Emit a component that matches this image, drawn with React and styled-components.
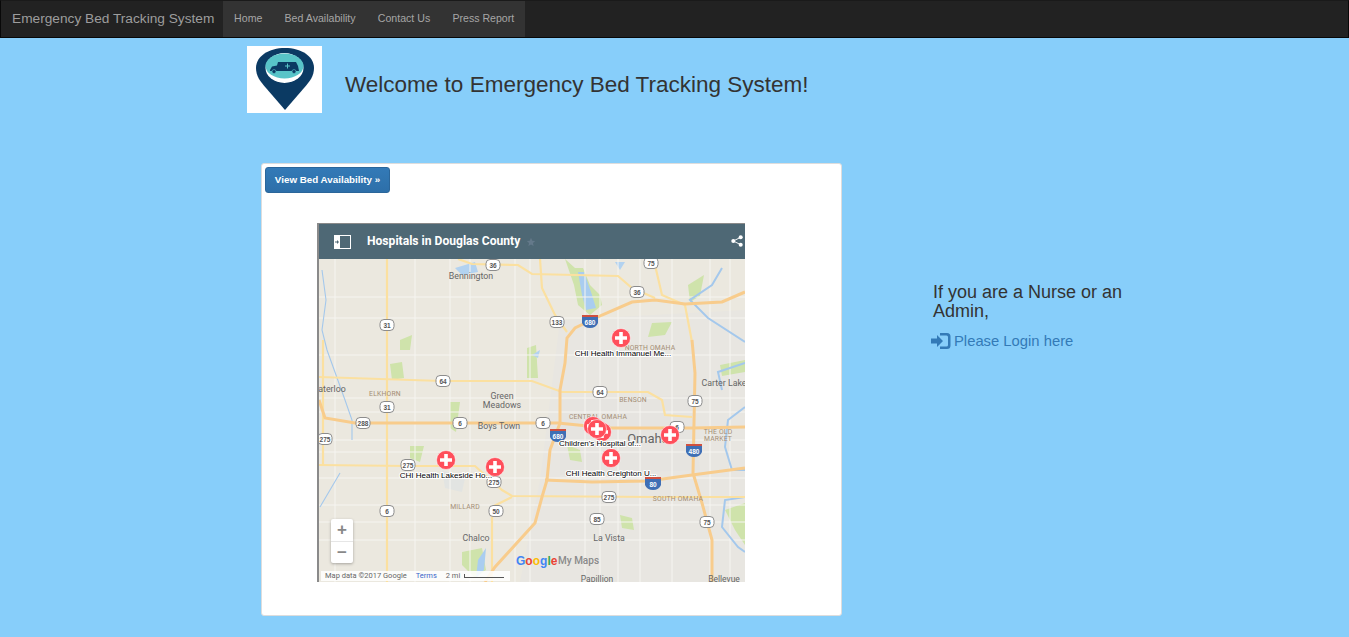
import React from "react";
import styled, { createGlobalStyle } from "styled-components";

const Global = createGlobalStyle`
  html, body { margin: 0; padding: 0; }
  body { background: #87cefa; font-family: "Liberation Sans", Arial, sans-serif; color: #333; min-height: 100vh; }
  * { box-sizing: border-box; }
`;

const Navbar = styled.nav`
  display: flex; height: 38px; background: #222; border: 1px solid #080808; border-top-color:#1a1a1a;
`;
const Brand = styled.a`
  font-size: 13.7px; line-height: 35px; color: #9d9d9d; padding: 0 11px; white-space: nowrap; width: 222px;
`;
const NavList = styled.div`
  display: flex; background: #333;
`;
const NavLink = styled.a`
  font-size: 10.6px; line-height: 35px; color: #a6a6a6; padding: 0 11.1px; white-space: nowrap;
`;
const Content = styled.main`
  padding: 8px 0 0 247px;
`;
const Header = styled.header`
  display: flex; align-items: center; height: 67px;
`;
const LogoBox = styled.div`
  width: 75px; height: 67px; background: #fff; flex: none;
  svg { display: block; }
`;
const Title = styled.h1`
  margin: 0 0 0 23px; font-size: 22.5px; font-weight: 400; color: #333; line-height: 1.1; position: relative; top: 6px;
  white-space: nowrap;
`;
const Row = styled.div`
  display: flex; margin: 50px 0 0 14px; align-items: flex-start;
`;
const Card = styled.section`
  width: 581px; height: 453px; background: #fff; border: 1px solid #ddd; border-radius: 3px; padding: 3px; flex: none;
`;
const Button = styled.a`
  display: block; width: 125px; height: 26px; line-height: 24px; text-align: center; font-size: 9.8px; font-weight: 700; color: #fff;
  background: linear-gradient(#337ab7, #2d6fa9); border: 1px solid #2b669a; border-radius: 3px;
`;
const MapFrame = styled.div`
  width: 428px; height: 359px; margin: 30px 0 0 52px; border-left: 2px solid #8a8a8a; border-top: 1px solid #8a8a8a; position: relative; overflow: hidden;
`;
const MapBar = styled.div`
  height: 35px; background: #4e6875; display: flex; align-items: center; padding-left: 15px; color: #fff; position: relative;
`;
const MapTitle = styled.span`
  font-family: Roboto, "Liberation Sans", sans-serif; font-weight: 700; font-size: 12.1px; margin-left: 16px; white-space: nowrap; position: relative; top: -1px;
`;
const BarIcon = styled.svg`
  flex: none; display: block;
`;
const ShareSlot = styled.div`
  position: absolute; right: 2px; top: 11px; line-height: 0;
`;
const MapCanvas = styled.svg`
  display: block; width: 426px; height: 323px;
`;
const ZoomBox = styled.div`
  position: absolute; left: 12px; top: 295px; width: 22px; height: 44px; background: #fff; border-radius: 2px;
  box-shadow: 0 1px 3px rgba(0,0,0,.3); display: flex; flex-direction: column;
`;
const ZoomBtn = styled.div`
  height: 22px; line-height: 21px; text-align: center; color: #888; font-size: 17px; font-weight: 700;
  border-top: ${(p) => (p.$split ? "1px solid #e6e6e6" : "0")};
`;
const Attribution = styled.div`
  position: absolute; left: 2px; top: 347px; width: 189px; height: 10px; background: rgba(255,255,255,.85);
  display: flex; align-items: center; padding-left: 4px; font: 7.5px/10px Roboto, sans-serif; color: #666; white-space: nowrap;
`;
const Terms = styled.span`
  color: #3a66c9; margin: 0 9px;
`;
const Scale = styled.i`
  display: inline-block; width: 40px; height: 4px; margin-left: 4px; border-left: 1px solid #555; border-bottom: 1px solid #555;
`;
const Side = styled.aside`
  width: 220px; margin: 120px 0 0 91px;
`;
const SideText = styled.h3`
  margin: 0; font-size: 18px; line-height: 19px; font-weight: 400; color: #333; width: 205px;
`;
const LoginLink = styled.a`
  display: flex; align-items: center; margin: 10px 0 0 -2px; color: #337ab7; font-size: 14.8px; line-height: 20px; white-space: nowrap;
  svg { margin-right: 3px; flex: none; }
`;

const Place = styled.text`
  font-family: Roboto, "Liberation Sans", sans-serif; font-size: ${(p) => p.$size || 8.5}px; fill: ${(p) => p.$fill || "#6b675e"};
  letter-spacing: ${(p) => p.$sp || 0}px; text-anchor: middle;
`;
const PinLabel = styled.text`
  font-family: "Liberation Sans", sans-serif; font-size: 8px; fill: #000; text-anchor: middle;
  paint-order: stroke; stroke: #fff; stroke-width: 2px;
`;
const ShieldText = styled.text`
  font-family: "Liberation Sans", sans-serif; font-size: 6.5px; font-weight: 700; text-anchor: middle; fill: ${(p) => p.$fill};
`;
const GoogleText = styled.text`
  font-family: "Liberation Sans", sans-serif; font-size: 12px; font-weight: 700;
`;
const MyMaps = styled.text`
  font-family: Roboto, sans-serif; font-size: 10px; font-weight: 500; fill: #8a8a8a;
`;

const navItems = ["Home", "Bed Availability", "Contact Us", "Press Report"];

const Logo = () => (
  <svg width="75" height="67" viewBox="247 46 75 67">
    <path d="M285 110 L266 88 C260 81 256 76 256 68 C256 56 269 48 285 48 C301 48 314 56 314 68 C314 76 310 81 304 88 Z" fill="#0b3a63" />
    <ellipse cx="284.500" cy="68" rx="19" ry="15" fill="#fff" />
    <ellipse cx="284.500" cy="66" rx="19" ry="12.500" fill="#58c4c8" />
    <path d="M270 70 L272 66.500 L277 65.500 L278 62 L296 62 L298 66 L299 71 L270 71Z" fill="#0b3a63" />
    <circle cx="274" cy="71.500" r="2" fill="#0b3a63" stroke="#58c4c8" strokeWidth=".6" />
    <circle cx="294" cy="71.500" r="2" fill="#0b3a63" stroke="#58c4c8" strokeWidth=".6" />
    <path d="M285 65.500 h2 v-2 h1 v2 h2 v1 h-2 v2 h-1 v-2 h-2z" fill="#58c4c8" />
  </svg>
);

const LoginIcon = () => (
  <svg width="20" height="18" viewBox="0 0 20 18">
    <path d="M0 6.500h6V3l6 6-6 6v-3.500H0z" fill="#337ab7" />
    <path d="M9 1h7a3.500 3.500 0 0 1 3.500 3.500v9A3.500 3.500 0 0 1 16 17H9v-2.500h6.500a1.500 1.500 0 0 0 1.500-1.500V5a1.500 1.500 0 0 0-1.500-1.500H9z" fill="#337ab7" />
  </svg>
);

const minorV = [335,415,450,470,515,530,585,600,618,640,672,710,730];
const minorH = [297,318,355,398,412,440,452,478,505,522,540];

const yellow = [
  "M387 259 V582",
  "M319 377 L442 381 L532 381 L562 392 L648 392 L662 400 L665 415 L692 417",
  "M319 465 L408 466 L475 466 L502 490 L512 496 L655 497 L745 497",
  "M492 582 V507 L512 497",
  "M458 259 L472 264 L518 265 L532 274 L618 276 L632 288 L655 298",
  "M540 259 L542 288 L555 315 L567 332",
  "M655 265 L662 295 L685 305 L692 342",
  "M323 340 V465",
];
const orange = [
  "M745 292 L722 302 L685 304 L655 300 L632 302 L602 315 L575 328 L567 338 L565 363 L560 390 L560 423 L550 450 L547 480 L542 497 L535 523 L495 567 L485 582",
  "M545 480 L592 482 L648 481 L692 475 L745 468",
  "M319 400 L325 418 L355 423 L558 423 L608 428 L692 428 L745 427",
  "M692 340 L695 373 L693 473 L702 503 L712 540 L712 582",
];
const water = [
  "M722 268 L712 285 L690 300 L708 318 L745 342",
  "M745 363 L718 372 L722 390",
  "M745 407 L728 420 L725 447 L732 470 L745 470",
  "M745 497 L725 500 L722 527 L738 547 L745 552",
  "M322 270 L326 300 L322 330 L327 350 L345 400 L352 420 L352 440",
  "M340 473 L330 490 L320 507",
];
const parks = [
  "M565 259 L575 268 L583 268 L590 285 L600 295 L602 305 L590 315 L578 305 L574 285 Z",
  "M652 323 L672 322 L665 335 L648 337 Z",
  "M688 285 L704 275 L700 296 L690 302 Z",
  "M450 402 L460 402 L456 432 L450 428 Z",
  "M390 364 L402 362 L404 378 L392 380 Z",
  "M527 348 L536 345 L538 378 L527 378 Z",
  "M462 552 L482 548 L486 570 L475 578 L462 565 Z",
  "M567 445 L580 450 L582 462 L570 460 Z",
  "M620 515 L632 518 L634 530 L622 528 Z",
  "M410 446 L424 446 L420 462 L410 458 Z",
  "M725 510 L745 503 L745 545 L735 530 Z",
  "M720 365 L745 360 L745 372 L722 376 Z",
  "M400 340 L412 335 L410 350 L400 350 Z",
];
const shields = [
  [493,265,"36"],[651,263,"75"],[637,292,"36"],[387,325,"31"],[557,322,"133"],
  [443,381,"64"],[387,407,"31"],[600,392,"64"],[695,401,"75"],[363,423,"288"],[460,423,"6"],[543,423,"6"],
  [325,439,"275"],[408,465,"275"],[494,482,"275"],[609,497,"275"],[387,511,"6"],[496,511,"50"],[597,519,"85"],[707,522,"75"],[677,427,"6"],
];
const interstates = [[590,321,"680"],[558,435,"680"],[694,450,"480"],[653,483,"80"]];
const places = [
  [471,279,"Bennington",8.8,"#666"],[385,396,"ELKHORN",6.8,"#a48e75",.2],[502,399,"Green",8.8,"#666"],
  [502,408,"Meadows",8.8,"#666"],[499,429,"Boys Town",8.8,"#666"],[598,419,"CENTRAL OMAHA",6.8,"#a48e75",.2],[633,402,"BENSON",6.8,"#a48e75",.2],
  [648,443,"Omaha",13,"#666"],[724,386,"Carter Lake",8.8,"#666"],[718,434,"THE OLD",6.8,"#a48e75",.2],[718,441,"MARKET",6.8,"#a48e75",.2],
  [332,392,"aterloo",8.8,"#666"],[465,509,"MILLARD",6.8,"#a48e75",.2],[476,541,"Chalco",8.8,"#666"],[609,541,"La Vista",8.8,"#666"],
  [678,501,"SOUTH OMAHA",6.8,"#a48e75",.2],[650,350,"NORTH OMAHA",6.8,"#a48e75",.2],[597,582,"Papillion",8.5,"#666"],[724,582,"Bellevue",8.5,"#666"],
];
const pins = [[593,426],[602,432],[597,429],[621,338],[446,460],[495,467],[611,458],[670,435]];
const pinLabels = [
  [623,356,"CHI Health Immanuel Me..."],[600,446,"Children's Hospital of..."],[611,476,"CHI Health Creighton U..."],[446,478,"CHI Health Lakeside Ho..."],
];

const MapDrawing = () => (
  <MapCanvas viewBox="319 259 426 323">
    <rect x="319" y="259" width="426" height="323" fill="#ebe8df" />
    <path d="M560 320 L745 310 V582 H520 L540 480 Z" fill="#e8e6e1" />
    <path d="M560 400 L690 395 L700 470 L560 475 Z" fill="#e6e4e0" />
    {parks.map((d, i) => <path key={i} d={d} fill="#cfe3ab" />)}
    <path d="M578 272 L584 272 L592 295 L596 308 L586 310 L582 295 Z M478 560 L486 548 L484 570 L476 578 Z" fill="#a9cdf0" />
    <path d="M455 268 L475 262 L478 272 L462 275 Z M615 262 L625 262 L620 270 Z M540 350 L532 355 L538 358 Z" fill="#b2d2f0" />
    <path d="M442 470 L465 478 L462 492 L445 488 Z" fill="#e2e4e2" />
    {minorV.map((x) => <path key={x} d={`M${x} 259 V582`} stroke="#f6f5f1" strokeWidth="1" fill="none" />)}
    {minorH.map((y) => <path key={y} d={`M319 ${y} H745`} stroke="#f6f5f1" strokeWidth="1" fill="none" />)}
    {water.map((d, i) => <path key={i} d={d} stroke="#a4c8ec" strokeWidth={i < 4 ? 2 : 1.1} fill="none" />)}
    {yellow.map((d, i) => <path key={i} d={d} stroke="#fbe0a0" strokeWidth="2.2" fill="none" />)}
    {orange.map((d, i) => <path key={i} d={d} stroke="#f8cc8c" strokeWidth="3" fill="none" />)}
    {shields.map(([x, y, n], i) => (
      <g key={i}>
        <rect x={x - 7} y={y - 5.500} width="14" height="11" rx="4" fill="#fff" stroke="#8c8c8c" />
        <ShieldText x={x} y={y + 2.500} $fill="#555">{n}</ShieldText>
      </g>
    ))}
    {interstates.map(([x, y, n], i) => (
      <g key={i}>
        <path d={`M${x - 8} ${y - 6} H${x + 8} V${y + 2} Q${x + 6} ${y + 7} ${x} ${y + 7} Q${x - 6} ${y + 7} ${x - 8} ${y + 2}Z`} fill="#3f6fb5" />
        <rect x={x - 8} y={y - 6} width="16" height="2" fill="#d0503f" />
        <ShieldText x={x} y={y + 3.500} $fill="#fff">{n}</ShieldText>
      </g>
    ))}
    {places.map(([x, y, t, s, f, sp], i) => (
      <Place key={i} x={x} y={y} $size={s} $fill={f} $sp={sp}>{t}</Place>
    ))}
    {pins.map(([x, y], i) => (
      <g key={i}>
        <circle cx={x} cy={y} r="9.500" fill="#ff4f5b" stroke="#fff" strokeOpacity=".55" strokeWidth="1" />
        <path d={`M${x - 6} ${y - 1.800} h4.200 v-4.200 h3.600 v4.200 h4.200 v3.600 h-4.200 v4.200 h-3.600 v-4.200 h-4.200z`} fill="#fff" />
      </g>
    ))}
    {pinLabels.map(([x, y, t], i) => <PinLabel key={i} x={x} y={y}>{t}</PinLabel>)}
    <GoogleText x="516" y="565">
      <tspan fill="#4285f4">G</tspan><tspan fill="#ea4335">o</tspan><tspan fill="#fbbc05">o</tspan><tspan fill="#4285f4">g</tspan><tspan fill="#34a853">l</tspan><tspan fill="#ea4335">e</tspan>
    </GoogleText>
    <MyMaps x="558" y="564">My Maps</MyMaps>
  </MapCanvas>
);

export default function App() {
  return (
    <>
      <Global />
      <Navbar>
        <Brand>Emergency Bed Tracking System</Brand>
        <NavList>
          {navItems.map((t) => <NavLink key={t}>{t}</NavLink>)}
        </NavList>
      </Navbar>
      <Content>
        <Header>
          <LogoBox><Logo /></LogoBox>
          <Title>Welcome to Emergency Bed Tracking System!</Title>
        </Header>
        <Row>
          <Card>
            <Button>View Bed Availability »</Button>
            <MapFrame>
              <MapBar>
                <BarIcon width="17" height="14" viewBox="0 0 17 14">
                  <rect x="0.500" y="0.500" width="16" height="13" fill="none" stroke="#fff" />
                  <rect x="0" y="0" width="6" height="14" fill="#fff" />
                  <path d="M1 6.500h2V5l2 2-2 2V7.500H1z" fill="#4e6875" />
                </BarIcon>
                <MapTitle>Hospitals in Douglas County</MapTitle>
                <BarIcon width="10" height="10" viewBox="0 0 24 24" style={{ marginLeft: 6 }}>
                  <path d="M12 2l3 7 7 .6-5.300 4.700 1.600 7.200L12 17.800 5.700 21.500l1.600-7.200L2 9.600 9 9z" fill="#64798a" />
                </BarIcon>
                <ShareSlot>
                  <svg width="12" height="12" viewBox="0 0 13 13">
                    <circle cx="2.500" cy="6.500" r="2.200" fill="#fff" /><circle cx="10.500" cy="2.500" r="2.200" fill="#fff" /><circle cx="10.500" cy="10.500" r="2.200" fill="#fff" />
                    <path d="M2.500 6.500L10.500 2.500M2.500 6.500L10.500 10.500" stroke="#fff" />
                  </svg>
                </ShareSlot>
              </MapBar>
              <MapDrawing />
              <ZoomBox>
                <ZoomBtn>+</ZoomBtn>
                <ZoomBtn $split>−</ZoomBtn>
              </ZoomBox>
              <Attribution>
                Map data ©2017 Google<Terms>Terms</Terms>2 mi<Scale />
              </Attribution>
            </MapFrame>
          </Card>
          <Side>
            <SideText>If you are a Nurse or an Admin,</SideText>
            <LoginLink><LoginIcon />Please Login here</LoginLink>
          </Side>
        </Row>
      </Content>
    </>
  );
}
